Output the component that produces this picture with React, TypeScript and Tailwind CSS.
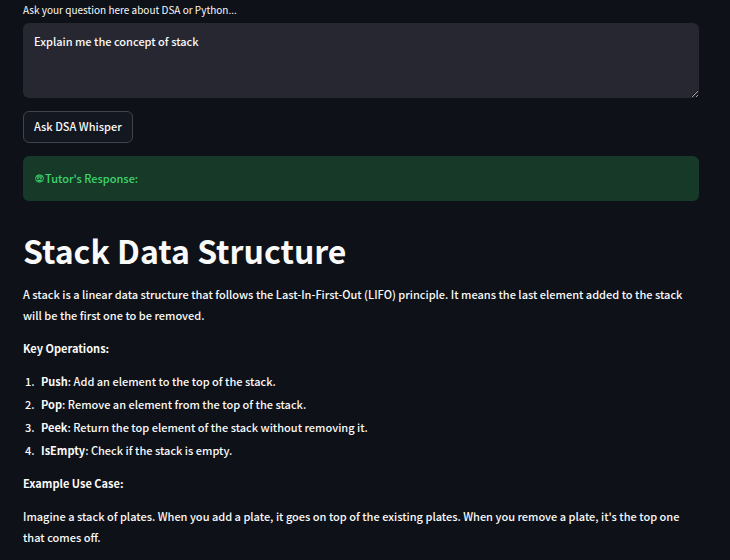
import React, { useState } from "react";

interface Operation {
  name: string;
  description: string;
}

const operations: Operation[] = [
  { name: "Push", description: "Add an element to the top of the stack." },
  { name: "Pop", description: "Remove an element from the top of the stack." },
  { name: "Peek", description: "Return the top element of the stack without removing it." },
  { name: "IsEmpty", description: "Check if the stack is empty." },
];

function TutorIcon(): React.ReactElement {
  return (
    <svg viewBox="0 0 18 18" className="h-[9px] w-[9px] shrink-0" aria-hidden="true">
      <ellipse cx="9" cy="9" rx="8" ry="7.4" fill="none" stroke="currentColor" strokeWidth="1.8" />
      <path d="M2 6 5 2.500h8L16 6l-3 1.500H5z" fill="currentColor" opacity="0.7" />
      <circle cx="6" cy="8.500" r="1.7" fill="currentColor" />
      <circle cx="12" cy="8.500" r="1.7" fill="currentColor" />
      <path d="M4 11.500h10c-.6 2.300-2.600 3.500-5 3.500s-4.400-1.200-5-3.500z" fill="currentColor" />
    </svg>
  );
}

function TutorResponse(): React.ReactElement {
  return (
    <article className="mt-7 flex flex-col gap-3 pr-4 leading-[21px]">
      <h1 className="text-[32px] leading-[43px] font-bold">Stack Data Structure</h1>
      <p>
        A stack is a linear data structure that follows the Last-In-First-Out (LIFO) principle. It
        means the last element added to the stack will be the first one to be removed.
      </p>
      <p>
        <strong>Key Operations:</strong>
      </p>
      <ol className="flex list-decimal flex-col gap-0.5 pl-3.5">
        {operations.map((op) => (
          <li key={op.name} className="pl-1">
            <strong>{op.name}</strong>: {op.description}
          </li>
        ))}
      </ol>
      <p>
        <strong>Example Use Case:</strong>
      </p>
      <p>
        Imagine a stack of plates. When you add a plate, it goes on top of the existing plates. When
        you remove a plate, it's the top one that comes off.
      </p>
    </article>
  );
}

export default function App(): React.ReactElement {
  const [question, setQuestion] = useState("Explain me the concept of stack");

  return (
    <main className="min-h-screen bg-[#0e1117] pr-[31px] pb-3 pl-[23px] font-['Noto_Sans_CJK_SC','Noto_Sans',sans-serif] text-[11px] font-medium text-[#fafafa]">
      <form onSubmit={(e) => e.preventDefault()} className="flex flex-col items-start">
        <label htmlFor="question" className="mb-1 text-[10px] leading-[19px] font-normal">
          Ask your question here about DSA or Python...
        </label>
        <textarea
          id="question"
          value={question}
          onChange={(e) => setQuestion(e.target.value)}
          className="h-[75px] w-full resize-y rounded-md bg-[#262730] px-[11px] py-2 leading-[21px] outline-none"
        />
        <button
          type="submit"
          className="mt-[13px] h-8 rounded-md border border-[#41444c] bg-[#131720] px-2.5 pb-0.5 leading-5"
        >
          Ask DSA Whisper
        </button>
      </form>
      <div
        role="status"
        className="mt-[13px] flex items-center gap-px rounded-md bg-[#173928] px-3 py-3 leading-[21px] text-[#3dd56d]"
      >
        <TutorIcon />
        <span>Tutor's Response:</span>
      </div>
      <TutorResponse />
    </main>
  );
}
